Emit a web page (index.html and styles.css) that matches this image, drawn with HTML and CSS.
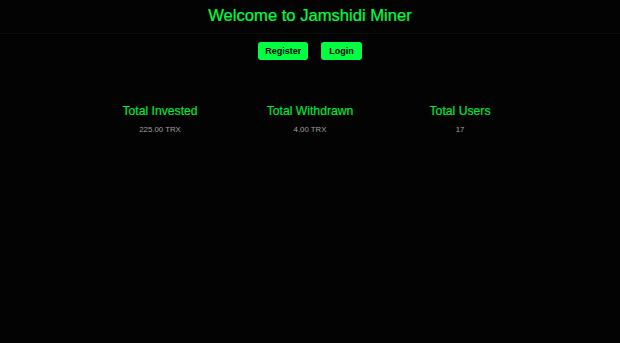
FILE: index.html
```html
<!DOCTYPE html>
<html>
<head>
<meta charset="utf-8">
<link rel="stylesheet" href="styles.css">
</head>
<body>
<header class="top">
  <h1 class="title">Welcome to Jamshidi Miner</h1>
</header>
<div class="actions">
  <button class="btn">Register</button>
  <button class="btn">Login</button>
</div>
<section class="stats">
  <div class="stat">
    <h2 class="stat-title">Total Invested</h2>
    <p class="stat-value">225.00 TRX</p>
  </div>
  <div class="stat">
    <h2 class="stat-title">Total Withdrawn</h2>
    <p class="stat-value">4.00 TRX</p>
  </div>
  <div class="stat">
    <h2 class="stat-title">Total Users</h2>
    <p class="stat-value">17</p>
  </div>
</section>
</body>
</html>
```
FILE: styles.css
```css
html, body {
  margin: 0;
  padding: 0;
  background: #030303;
  font-family: "Liberation Sans", Arial, sans-serif;
  height: 100%;
}
.top {
  height: 33px;
  border-bottom: 1px solid #081008;
  display: flex;
  align-items: center;
  justify-content: center;
}
.title {
  margin: 0;
  font-size: 16.6px;
  font-weight: normal;
  color: #00ff41;
  line-height: 1;
  -webkit-text-stroke: 0.2px #00ff41;
}
.actions {
  display: flex;
  justify-content: center;
  gap: 13px;
  margin-top: 8px;
}
.btn {
  height: 18px;
  padding: 0 7px;
  border: none;
  border-radius: 3px;
  background: #00ff41;
  color: #000;
  font-family: "Liberation Sans", Arial, sans-serif;
  font-weight: bold;
  font-size: 9px;
  line-height: 18px;
}
.btn + .btn {
  padding: 0 8px;
}
.stats {
  display: flex;
  justify-content: center;
  margin-top: 44px;
}
.stat {
  width: 150px;
  text-align: center;
}
.stat-title {
  margin: 0;
  font-size: 12.2px;
  font-weight: normal;
  color: #00e83a;
  line-height: 14px;
  -webkit-text-stroke: 0.15px #00e83a;
}
.stat-value {
  margin: 7px 0 0;
  font-size: 7.8px;
  color: #a0a0a0;
  line-height: 9px;
}
```
